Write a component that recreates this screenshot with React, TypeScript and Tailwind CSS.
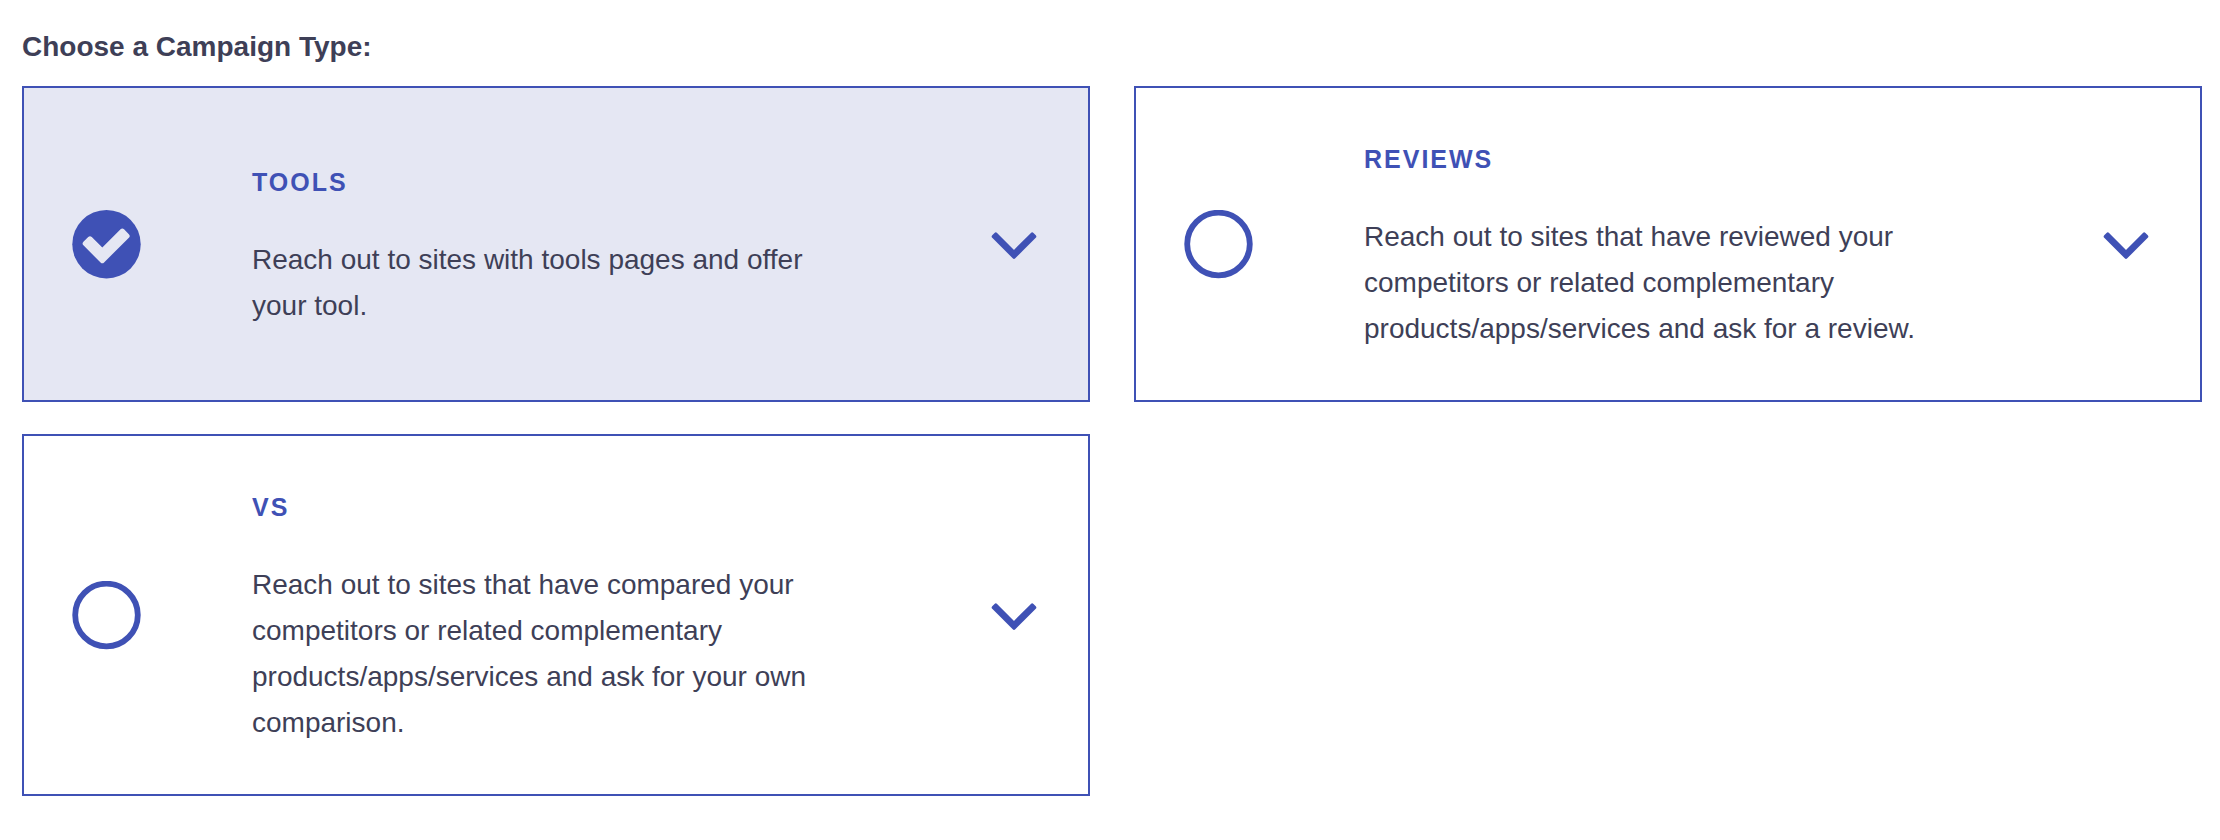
import { useState } from 'react';

interface CampaignType {
  id: string;
  title: string;
  description: string;
}

const campaignTypes: CampaignType[] = [
  {
    id: 'tools',
    title: 'Tools',
    description: 'Reach out to sites with tools pages and offer your tool.',
  },
  {
    id: 'reviews',
    title: 'Reviews',
    description:
      'Reach out to sites that have reviewed your competitors or related complementary products/apps/services and ask for a review.',
  },
  {
    id: 'vs',
    title: 'VS',
    description:
      'Reach out to sites that have compared your competitors or related complementary products/apps/services and ask for your own comparison.',
  },
];

function RadioIcon({ checked }: { checked: boolean }) {
  if (!checked) {
    return (
      <svg viewBox="0 0 69 69" className="size-[69px]" fill="none" aria-hidden="true">
        <circle cx="34.5" cy="34" r="31.3" stroke="#3f51b5" strokeWidth="5.8" />
      </svg>
    );
  }

  return (
    <svg viewBox="0 0 69 69" className="size-[69px]" aria-hidden="true">
      <circle cx="34.5" cy="34.2" r="34.2" fill="#3f51b5" />
      <path
        d="M13.2 33.6L18 28.8L30.3 41.1L50.3 21.1L55.1 25.9L30.3 50.7Z"
        fill="#e5e7f3"
        stroke="#e5e7f3"
        strokeWidth="5"
        strokeLinejoin="round"
      />
    </svg>
  );
}

function ChevronIcon() {
  return (
    <svg viewBox="0 0 52 52" className="size-[52px]" aria-hidden="true">
      <path
        d="M7.8 16.2L26 34.4L44.2 16.2L46.5 18.5L26 39L5.5 18.5Z"
        fill="#3f51b5"
        stroke="#3f51b5"
        strokeWidth="3.6"
        strokeLinejoin="round"
      />
    </svg>
  );
}

interface CampaignCardProps {
  campaign: CampaignType;
  checked: boolean;
  onSelect: () => void;
}

function CampaignCard({ campaign, checked, onSelect }: CampaignCardProps) {
  return (
    <div
      className={`flex items-center border-2 border-[#3f51b5] p-12 ${checked ? 'bg-[#e5e7f3]' : 'bg-white'}`}
    >
      <label className="relative flex flex-1 cursor-pointer items-center pr-32">
        <input
          type="radio"
          name="campaignType"
          value={campaign.id}
          checked={checked}
          onChange={onSelect}
          className="sr-only"
        />
        <span className="w-[180px] shrink-0">
          <RadioIcon checked={checked} />
        </span>
        <span className="flex flex-col gap-8">
          <span className="text-[25px] leading-[46px] font-bold tracking-[2px] text-[#3f51b5] uppercase">
            {campaign.title}
          </span>
          <span className="text-[28px] leading-[46px]">{campaign.description}</span>
        </span>
      </label>
      <button type="button" aria-label={`Show ${campaign.title} details`} className="shrink-0 cursor-pointer">
        <ChevronIcon />
      </button>
    </div>
  );
}

export default function App() {
  const [selected, setSelected] = useState('tools');

  return (
    <fieldset className="min-w-0 bg-white pt-6 pr-[18px] pb-11 pl-[22px] font-['Liberation_Sans',Arial,sans-serif] text-[#3e3f57]">
      <legend className="float-left mb-4 w-full text-[28px] leading-[46px] font-bold">
        Choose a Campaign Type:
      </legend>
      <div className="clear-both grid grid-cols-1 gap-x-11 gap-y-8 lg:grid-cols-2">
        {campaignTypes.map((campaign) => (
          <CampaignCard
            key={campaign.id}
            campaign={campaign}
            checked={selected === campaign.id}
            onSelect={() => setSelected(campaign.id)}
          />
        ))}
      </div>
    </fieldset>
  );
}
